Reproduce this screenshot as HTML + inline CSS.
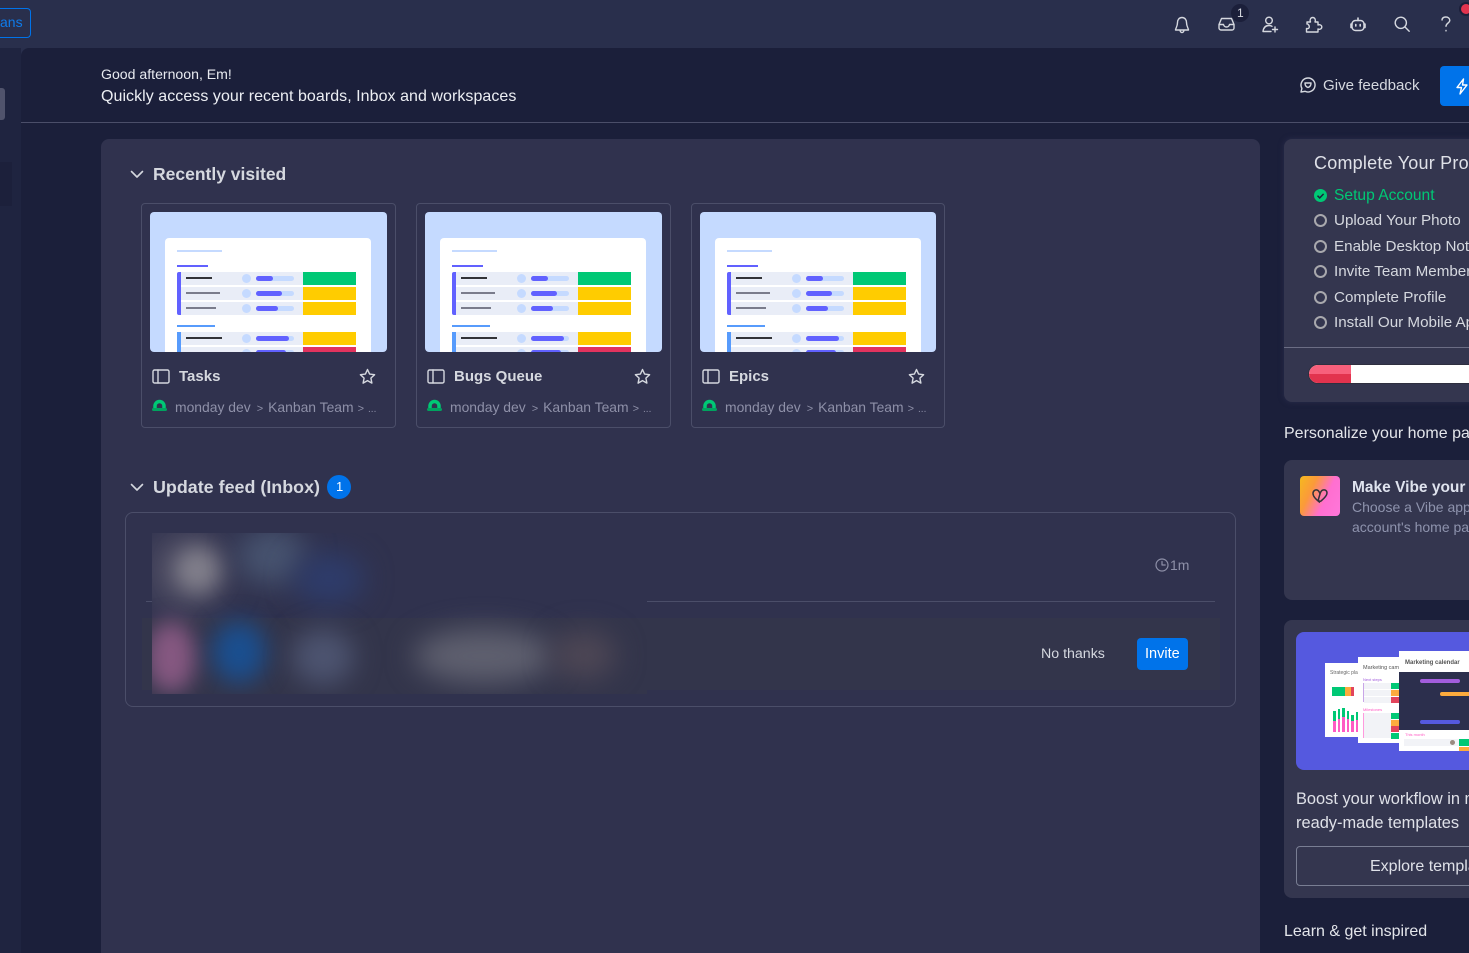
<!DOCTYPE html>
<html><head><meta charset="utf-8"><style>
html,body{margin:0;padding:0;width:1469px;height:953px;overflow:hidden;background:#292f4c}
body{font-family:"Liberation Sans",sans-serif;color:#d5d8df}
#root{position:absolute;left:0;top:0;width:1469px;height:953px;overflow:hidden}
.a{position:absolute}
.t{position:absolute;white-space:nowrap;line-height:20px}
svg{position:absolute;overflow:visible}
.card{position:absolute;top:203px;width:253px;height:223px;border:1px solid #4b4e69;border-radius:4px}
.thumb{position:absolute;left:8px;top:8px;width:237px;height:140px;background:#c5daff;border-radius:4px;overflow:hidden}
.thumb div{position:absolute}
.w{left:15px;top:26px;width:206px;height:130px;background:#fff;border-radius:4px}
.row{left:31px;width:122px;height:13px;background:#e9edf7}
.cell{left:153px;width:53px;height:13px}
.ln{left:36px;height:1.5px;background:#7a7c8c}
.dot{left:92px;width:9px;height:9px;border-radius:50%;background:#c5daff}
.tr{left:106px;width:38px;height:5px;border-radius:3px;background:#c5daff}
.fl{left:106px;height:5px;border-radius:3px;background:#6161ff}
.ctitle{font-size:15px;font-weight:700;left:37px;top:163px;color:#d5d8df}
.bread{font-size:13.9px;left:33px;top:193px;color:#8e90a8}
.bread i{font-style:normal;font-size:11px;margin:0 5px 0 6px}
.bread u{text-decoration:none;font-size:11px;margin:0 4px 0 4px}
.bread b{font-weight:400;font-size:10px}
.li{font-size:15.2px;left:1334px;color:#d5d8df}
.ring{position:absolute;left:1314px;width:9px;height:9px;border:2px solid #a8a8ad;border-radius:50%}
.ic{fill:none;stroke:#d5d8df;stroke-width:1.4;stroke-linecap:round;stroke-linejoin:round}
.blur{position:absolute;border-radius:50%}
</style></head><body><div id="root">

<div class="a" style="left:0;top:48px;width:21px;height:905px;background:#1f2440"></div>
<div class="a" style="left:0;top:88px;width:5px;height:32px;background:#50536c;border-radius:0 3px 3px 0"></div>
<div class="a" style="left:0;top:162px;width:12px;height:44px;background:#1c203b"></div>
<div class="a" style="left:21px;top:48px;width:1448px;height:905px;background:#1b1f3a;border-radius:8px 0 0 0"></div>

<div class="a" style="left:-20px;top:8px;width:49px;height:28px;border:1px solid #0073ea;border-radius:4px"></div>
<div class="t" style="left:0;top:12px;font-size:14px;color:#0f7bea">ans</div>

<svg class="ic" style="left:1174px;top:16px" width="16" height="18" viewBox="0 0 16 18"><path d="M8 1.500C5 1.500 3.500 4 3.500 6.500c0 4-1.800 5.500-2 7.500h13c-.2-2-2-3.500-2-7.500C12.500 4 11 1.500 8 1.500zM6 14.200c.2 1.500 1 2.300 2 2.300s1.800-.8 2-2.300"/></svg>
<svg class="ic" style="left:1218px;top:16px" width="17" height="16" viewBox="0 0 17 16"><path d="M3.500 2.500h10l2.500 6v3.500a2 2 0 0 1-2 2H3a2 2 0 0 1-2-2V8.500zM1 8.500h4.500c.5 2 1.500 2.500 3 2.500s2.500-.5 3-2.500H16"/></svg>
<div class="a" style="left:1231px;top:4px;width:18px;height:18px;border-radius:50%;background:#1b1f3a"></div>
<div class="t" style="left:1237px;top:3px;font-size:12px;color:#d5d8df">1</div>
<svg class="ic" style="left:1262px;top:16px" width="17" height="17" viewBox="0 0 17 17"><circle cx="7" cy="4.500" r="3.300"/><path d="M1 15.500c.5-4 2.500-6 6-6 1.200 0 2.200.3 3 .8M1 15.500h8M13 11v5M10.500 13.500h5"/></svg>
<svg class="ic" style="left:1305px;top:16px" width="18" height="17" viewBox="0 0 18 17"><path d="M2 6h3.500c-1-2 0-4.500 2.200-4.500S11 4 10 6h3v3c2-.8 3.800.3 3.800 2s-1.800 2.800-3.800 2v3H1.500v-3.500c1.800.5 2.800-.5 2.800-1.800S3 7.700 2 8z"/></svg>
<svg class="ic" style="left:1350px;top:17px" width="16" height="15" viewBox="0 0 16 15"><rect x="2" y="3.500" width="12" height="10" rx="3.500"/><path d="M8 3.500V1M2 7H1v3.500h1M14 7h1v3.500h-1M5.800 7.500v1.500M10.200 7.500v1.500" stroke-width="1.600"/></svg>
<svg class="ic" style="left:1394px;top:16px" width="16" height="16" viewBox="0 0 16 16"><circle cx="6.800" cy="6.800" r="5.600"/><path d="M11 11l4.200 4.200"/></svg>
<svg class="ic" style="left:1441px;top:16px" width="10" height="16" viewBox="0 0 10 16"><path d="M1 4c.2-2 1.800-3 3.800-3C7 1 8.800 2.300 8.800 4.300c0 2.700-3.800 2.900-3.800 6M5 14.500v.4"/></svg>
<div class="a" style="left:1461px;top:4px;width:10px;height:10px;border-radius:50%;background:#e2334e;box-shadow:0 0 0 2px #1b1f3a"></div>

<div class="t" style="left:101px;top:64px;font-size:14.1px;color:#e8eaf0">Good afternoon, Em!</div>
<div class="t" style="left:101px;top:87px;font-size:16px;letter-spacing:.05px;color:#eceef3">Quickly access your recent boards, Inbox and workspaces</div>
<svg class="ic" style="left:1300px;top:77px" width="16" height="16" viewBox="0 0 16 16"><path d="M8 1a7 7 0 1 1-3 13.300L1 15l.9-3.600A7 7 0 0 1 8 1z"/><path d="M5 6h6c0 2.500-1.500 4-3 4.500C6.500 10 5 8.500 5 6z"/></svg>
<div class="t" style="left:1323px;top:76px;font-size:15.1px;color:#d5d8df">Give feedback</div>
<div class="a" style="left:1440px;top:66px;width:40px;height:40px;background:#0073ea;border-radius:4px"></div>
<svg class="ic" style="left:1456px;top:78px;stroke:#fff" width="12" height="17" viewBox="0 0 12 17"><path d="M7.500 1L1 9.500h4.500L4 16l7-9H6.500z"/></svg>
<div class="a" style="left:21px;top:122px;width:1448px;height:1px;background:#4b4e69"></div>

<div class="a" style="left:101px;top:139px;width:1159px;height:830px;background:#30324e;border-radius:8px"></div>

<svg class="ic" style="left:130px;top:170px;stroke-width:1.600" width="14" height="9" viewBox="0 0 14 9"><path d="M1.500 1.500L7 7l5.500-5.500"/></svg>
<div class="t" style="left:153px;top:164px;font-size:17.5px;font-weight:700;color:#d5d8df">Recently visited</div>

<!-- Card 1 -->
<div class="card" style="left:141px">
 <div class="thumb"><div class="w"></div>
  <div style="left:27px;top:38px;width:45px;height:2px;background:#c5daff"></div>
  <div style="left:27px;top:53px;width:31px;height:2px;background:#6161ff"></div>
  <div style="left:27px;top:60px;width:4px;height:43px;background:#6161ff;border-radius:2px 0 0 2px"></div>
  <div class="row" style="top:60px"></div><div class="row" style="top:75px"></div><div class="row" style="top:90px"></div>
  <div class="cell" style="top:60px;background:#00c875"></div><div class="cell" style="top:75px;background:#fc0"></div><div class="cell" style="top:90px;background:#fc0"></div>
  <div class="ln" style="top:65px;width:26px;background:#323338"></div><div class="ln" style="top:80px;width:34px"></div><div class="ln" style="top:95px;width:30px"></div>
  <div class="dot" style="top:62px"></div><div class="dot" style="top:77px"></div><div class="dot" style="top:92px"></div>
  <div class="tr" style="top:64px"></div><div class="tr" style="top:79px"></div><div class="tr" style="top:94px"></div>
  <div class="fl" style="top:64px;width:17px"></div><div class="fl" style="top:79px;width:26px"></div><div class="fl" style="top:94px;width:22px"></div>
  <div style="left:27px;top:113px;width:38px;height:2px;background:#579bfc"></div>
  <div style="left:27px;top:120px;width:4px;height:20px;background:#579bfc"></div>
  <div class="row" style="top:120px"></div><div class="row" style="top:135px"></div>
  <div class="cell" style="top:120px;background:#fc0"></div><div class="cell" style="top:135px;background:#e2335e"></div>
  <div class="ln" style="top:125px;width:36px;background:#323338"></div>
  <div class="dot" style="top:122px"></div><div class="dot" style="top:137px"></div>
  <div class="tr" style="top:124px"></div><div class="tr" style="top:138px"></div>
  <div class="fl" style="top:124px;width:33px"></div><div class="fl" style="top:138px;width:30px"></div>
 </div>
 <svg class="ic" style="left:10px;top:165px" width="18" height="15" viewBox="0 0 18 15"><rect x="1" y="1" width="16" height="13" rx="1.500"/><path d="M6 1v13"/></svg>
 <div class="t ctitle">Tasks</div>
 <svg class="ic" style="left:217px;top:164px" width="17" height="17" viewBox="0 0 17 17"><path d="M8.500 1.500l2.100 4.600 5 .6-3.700 3.400 1 5-4.400-2.500-4.400 2.500 1-5L1.400 6.700l5-.6z"/></svg>
 <svg style="left:9px;top:195px" width="17" height="13" viewBox="0 0 17 13"><path d="M4 9V7a4.500 4.500 0 0 1 9 0v2" fill="none" stroke="#00c875" stroke-width="3.500"/><rect x="1" y="9" width="15" height="3" rx="1.500" fill="#00a35f"/></svg>
 <div class="t bread">monday dev<i>&gt;</i>Kanban Team<u>&gt;</u><b>...</b></div>
</div>

<!-- Card 2 -->
<div class="card" style="left:416px;width:253px">
 <div class="thumb"><div class="w"></div>
  <div style="left:27px;top:38px;width:45px;height:2px;background:#c5daff"></div>
  <div style="left:27px;top:53px;width:31px;height:2px;background:#6161ff"></div>
  <div style="left:27px;top:60px;width:4px;height:43px;background:#6161ff;border-radius:2px 0 0 2px"></div>
  <div class="row" style="top:60px"></div><div class="row" style="top:75px"></div><div class="row" style="top:90px"></div>
  <div class="cell" style="top:60px;background:#00c875"></div><div class="cell" style="top:75px;background:#fc0"></div><div class="cell" style="top:90px;background:#fc0"></div>
  <div class="ln" style="top:65px;width:26px;background:#323338"></div><div class="ln" style="top:80px;width:34px"></div><div class="ln" style="top:95px;width:30px"></div>
  <div class="dot" style="top:62px"></div><div class="dot" style="top:77px"></div><div class="dot" style="top:92px"></div>
  <div class="tr" style="top:64px"></div><div class="tr" style="top:79px"></div><div class="tr" style="top:94px"></div>
  <div class="fl" style="top:64px;width:17px"></div><div class="fl" style="top:79px;width:26px"></div><div class="fl" style="top:94px;width:22px"></div>
  <div style="left:27px;top:113px;width:38px;height:2px;background:#579bfc"></div>
  <div style="left:27px;top:120px;width:4px;height:20px;background:#579bfc"></div>
  <div class="row" style="top:120px"></div><div class="row" style="top:135px"></div>
  <div class="cell" style="top:120px;background:#fc0"></div><div class="cell" style="top:135px;background:#e2335e"></div>
  <div class="ln" style="top:125px;width:36px;background:#323338"></div>
  <div class="dot" style="top:122px"></div><div class="dot" style="top:137px"></div>
  <div class="tr" style="top:124px"></div><div class="tr" style="top:138px"></div>
  <div class="fl" style="top:124px;width:33px"></div><div class="fl" style="top:138px;width:30px"></div>
 </div>
 <svg class="ic" style="left:10px;top:165px" width="18" height="15" viewBox="0 0 18 15"><rect x="1" y="1" width="16" height="13" rx="1.500"/><path d="M6 1v13"/></svg>
 <div class="t ctitle">Bugs Queue</div>
 <svg class="ic" style="left:217px;top:164px" width="17" height="17" viewBox="0 0 17 17"><path d="M8.500 1.500l2.100 4.600 5 .6-3.700 3.400 1 5-4.400-2.500-4.400 2.500 1-5L1.400 6.700l5-.6z"/></svg>
 <svg style="left:9px;top:195px" width="17" height="13" viewBox="0 0 17 13"><path d="M4 9V7a4.500 4.500 0 0 1 9 0v2" fill="none" stroke="#00c875" stroke-width="3.500"/><rect x="1" y="9" width="15" height="3" rx="1.500" fill="#00a35f"/></svg>
 <div class="t bread">monday dev<i>&gt;</i>Kanban Team<u>&gt;</u><b>...</b></div>
</div>

<!-- Card 3 -->
<div class="card" style="left:691px;width:252px">
 <div class="thumb" style="width:236px"><div class="w"></div>
  <div style="left:27px;top:38px;width:45px;height:2px;background:#c5daff"></div>
  <div style="left:27px;top:53px;width:31px;height:2px;background:#6161ff"></div>
  <div style="left:27px;top:60px;width:4px;height:43px;background:#6161ff;border-radius:2px 0 0 2px"></div>
  <div class="row" style="top:60px"></div><div class="row" style="top:75px"></div><div class="row" style="top:90px"></div>
  <div class="cell" style="top:60px;background:#00c875"></div><div class="cell" style="top:75px;background:#fc0"></div><div class="cell" style="top:90px;background:#fc0"></div>
  <div class="ln" style="top:65px;width:26px;background:#323338"></div><div class="ln" style="top:80px;width:34px"></div><div class="ln" style="top:95px;width:30px"></div>
  <div class="dot" style="top:62px"></div><div class="dot" style="top:77px"></div><div class="dot" style="top:92px"></div>
  <div class="tr" style="top:64px"></div><div class="tr" style="top:79px"></div><div class="tr" style="top:94px"></div>
  <div class="fl" style="top:64px;width:17px"></div><div class="fl" style="top:79px;width:26px"></div><div class="fl" style="top:94px;width:22px"></div>
  <div style="left:27px;top:113px;width:38px;height:2px;background:#579bfc"></div>
  <div style="left:27px;top:120px;width:4px;height:20px;background:#579bfc"></div>
  <div class="row" style="top:120px"></div><div class="row" style="top:135px"></div>
  <div class="cell" style="top:120px;background:#fc0"></div><div class="cell" style="top:135px;background:#e2335e"></div>
  <div class="ln" style="top:125px;width:36px;background:#323338"></div>
  <div class="dot" style="top:122px"></div><div class="dot" style="top:137px"></div>
  <div class="tr" style="top:124px"></div><div class="tr" style="top:138px"></div>
  <div class="fl" style="top:124px;width:33px"></div><div class="fl" style="top:138px;width:30px"></div>
 </div>
 <svg class="ic" style="left:10px;top:165px" width="18" height="15" viewBox="0 0 18 15"><rect x="1" y="1" width="16" height="13" rx="1.500"/><path d="M6 1v13"/></svg>
 <div class="t ctitle">Epics</div>
 <svg class="ic" style="left:216px;top:164px" width="17" height="17" viewBox="0 0 17 17"><path d="M8.500 1.500l2.100 4.600 5 .6-3.700 3.400 1 5-4.400-2.500-4.400 2.500 1-5L1.400 6.700l5-.6z"/></svg>
 <svg style="left:9px;top:195px" width="17" height="13" viewBox="0 0 17 13"><path d="M4 9V7a4.500 4.500 0 0 1 9 0v2" fill="none" stroke="#00c875" stroke-width="3.500"/><rect x="1" y="9" width="15" height="3" rx="1.500" fill="#00a35f"/></svg>
 <div class="t bread">monday dev<i>&gt;</i>Kanban Team<u>&gt;</u><b>...</b></div>
</div>

<!-- Update feed -->
<svg class="ic" style="left:130px;top:483px;stroke-width:1.600" width="14" height="9" viewBox="0 0 14 9"><path d="M1.500 1.500L7 7l5.500-5.500"/></svg>
<div class="t" style="left:153px;top:477px;font-size:17.9px;font-weight:700;color:#d5d8df">Update feed (Inbox)</div>
<div class="a" style="left:327px;top:475px;width:24px;height:24px;border-radius:50%;background:#0073ea"></div>
<div class="t" style="left:336px;top:477px;font-size:13px;color:#fff">1</div>

<div class="a" style="left:125px;top:512px;width:1109px;height:193px;border:1px solid #4b4e69;border-radius:8px"></div>
<div class="a" style="left:146px;top:601px;width:1069px;height:1px;background:#4b4e69"></div>
<div class="a" style="left:142px;top:618px;width:1078px;height:72px;background:#33354b"></div>
<div class="a" style="left:152px;top:533px;width:495px;height:161px;background:#30324e;overflow:hidden">
 <div class="a" style="left:0;top:85px;width:495px;height:76px;background:#33354b"></div>
 <div class="blur" style="left:-10px;top:-5px;width:90px;height:85px;background:#4a4960;filter:blur(14px)"></div>
 <div class="blur" style="left:22px;top:14px;width:46px;height:46px;background:#807e8a;filter:blur(10px)"></div>
 <div class="blur" style="left:85px;top:-6px;width:70px;height:58px;background:#47536f;filter:blur(14px)"></div>
 <div class="blur" style="left:142px;top:20px;width:70px;height:52px;background:#2e3c6b;filter:blur(14px)"></div>
 <div class="blur" style="left:-6px;top:88px;width:50px;height:72px;background:#865881;filter:blur(11px)"></div>
 <div class="blur" style="left:60px;top:88px;width:54px;height:62px;background:#1a4f90;filter:blur(12px)"></div>
 <div class="blur" style="left:140px;top:96px;width:62px;height:56px;background:#4d5470;filter:blur(13px)"></div>
 <div class="blur" style="left:262px;top:96px;width:140px;height:54px;background:#5f606f;filter:blur(14px)"></div>
 <div class="blur" style="left:400px;top:98px;width:64px;height:48px;background:#4e4755;filter:blur(14px)"></div>
</div>
<svg class="ic" style="left:1155px;top:558px;stroke:#8e90a8;stroke-width:1.200" width="14" height="14" viewBox="0 0 14 14"><circle cx="7" cy="7" r="6"/><path d="M7 3.500V7h3.200"/></svg>
<div class="t" style="left:1170px;top:555px;font-size:14px;color:#8e90a8">1m</div>
<div class="t" style="left:1041px;top:644px;font-size:14.2px;color:#d5d8df">No thanks</div>
<div class="a" style="left:1137px;top:638px;width:51px;height:32px;background:#0073ea;border-radius:4px"></div>
<div class="t" style="left:1145px;top:644px;font-size:14.5px;color:#fff">Invite</div>

<!-- Right column -->
<div class="a" style="left:1284px;top:139px;width:200px;height:263px;background:#34364f;border-radius:8px;box-shadow:0 0 6px #2a2d4c"></div>
<div class="t" style="left:1314px;top:153px;font-size:18px;letter-spacing:.22px;color:#dfe1e8">Complete Your Profile</div>
<svg style="left:1314px;top:189px" width="13" height="13" viewBox="0 0 13 13"><circle cx="6.500" cy="6.500" r="6.500" fill="#00c875"/><path d="M3.500 6.700l2.200 2.200 3.900-4" fill="none" stroke="#1b1f3a" stroke-width="1.500"/></svg>
<div class="t li" style="top:186px;font-size:15.6px;color:#00c875">Setup Account</div>
<div class="ring" style="top:214px"></div><div class="t li" style="top:211px">Upload Your Photo</div>
<div class="ring" style="top:240px"></div><div class="t li" style="top:237px">Enable Desktop Notifications</div>
<div class="ring" style="top:265px"></div><div class="t li" style="top:262px">Invite Team Members</div>
<div class="ring" style="top:291px"></div><div class="t li" style="top:288px">Complete Profile</div>
<div class="ring" style="top:316px"></div><div class="t li" style="top:313px">Install Our Mobile App</div>
<div class="a" style="left:1284px;top:347px;width:185px;height:1px;background:#6b6d84"></div>
<div class="a" style="left:1309px;top:365px;width:180px;height:18px;background:#fff;border-radius:9px;overflow:hidden;box-shadow:0 0 0 1px #2e2f3f">
 <div class="a" style="left:0;top:0;width:42px;height:9px;background:#f7607c"></div>
 <div class="a" style="left:0;top:9px;width:42px;height:9px;background:#e2334e"></div>
</div>

<div class="t" style="left:1284px;top:424px;font-size:16px;color:#e3e5ea">Personalize your home page</div>
<div class="a" style="left:1284px;top:460px;width:200px;height:140px;background:#34364f;border-radius:8px"></div>
<div class="a" style="left:1300px;top:476px;width:40px;height:40px;border-radius:4px;background:linear-gradient(115deg,#f5b91e 0%,#fb9a3a 30%,#ff6fd0 62%,#ff77da 100%)"></div>
<svg style="left:1312px;top:488px;fill:none;stroke:#323338;stroke-width:1.500;stroke-linejoin:round" width="16" height="16" viewBox="0 0 16 16"><path d="M8 14.500C4 11.500 1 8.500 1 5.500 1 3 3 1.500 5 2c1.500.4 2.500 2 3 4l-1.500 5c-.5 1.500 1 3 2.500 2 3-2.500 6-5.500 6-8S13 1.500 11 2C9.500 2.400 8.500 4 8 6"/></svg>
<div class="t" style="left:1352px;top:478px;font-size:15.5px;font-weight:700;color:#dfe3ee">Make Vibe your home page</div>
<div class="t" style="left:1352px;top:497px;font-size:14px;color:#8e93ad">Choose a Vibe app as your</div>
<div class="t" style="left:1352px;top:517px;font-size:14px;color:#8e93ad">account's home page</div>

<div class="a" style="left:1284px;top:620px;width:200px;height:278px;background:#34364f;border-radius:8px"></div>
<div class="a" style="left:1296px;top:632px;width:190px;height:138px;background:#5559df;border-radius:8px"></div>

<!-- Strategic plan -->
<div class="a" style="left:1325px;top:663px;width:36px;height:74px;background:#fff">
 <div class="t" style="left:5px;top:0;font-size:5px;color:#666">Strategic plan</div>
 <div class="a" style="left:7px;top:24px;width:22px;height:9px;background:linear-gradient(90deg,#00c875 59%,#fdab3d 59%,#fdab3d 86%,#e2445c 86%)"></div>
 <div class="a" style="left:8px;top:48px;width:2.500px;height:10px;background:#00c875"></div><div class="a" style="left:8px;top:58px;width:2.500px;height:11px;background:#ff5ac4"></div>
 <div class="a" style="left:12.500px;top:46px;width:2.500px;height:10px;background:#00c875"></div><div class="a" style="left:12.500px;top:56px;width:2.500px;height:13px;background:#ff5ac4"></div>
 <div class="a" style="left:17px;top:45px;width:2.500px;height:9px;background:#00c875"></div><div class="a" style="left:17px;top:54px;width:2.500px;height:15px;background:#ff5ac4"></div>
 <div class="a" style="left:21.500px;top:48px;width:2.500px;height:8px;background:#00c875"></div><div class="a" style="left:21.500px;top:56px;width:2.500px;height:13px;background:#ff5ac4"></div>
 <div class="a" style="left:26px;top:52px;width:2.500px;height:6px;background:#00c875"></div><div class="a" style="left:26px;top:58px;width:2.500px;height:11px;background:#ff5ac4"></div>
 <div class="a" style="left:30.500px;top:49px;width:2.500px;height:8px;background:#00c875"></div><div class="a" style="left:30.500px;top:57px;width:2.500px;height:12px;background:#ff5ac4"></div>
</div>

<!-- Marketing campaign -->
<div class="a" style="left:1358px;top:657px;width:42px;height:86px;background:#fff">
 <div class="t" style="left:5px;top:1px;font-size:5.500px;color:#555">Marketing campaign</div>
 <div class="t" style="left:5px;top:13px;font-size:4px;color:#a25ddc">Next steps</div>
 <div class="a" style="left:5px;top:26px;width:1px;height:19px;background:#c9a6e8"></div>
 <div class="a" style="left:6px;top:26px;width:27px;height:5.500px;background:#f2f3f7"></div>
 <div class="a" style="left:6px;top:33px;width:27px;height:5.500px;background:#f2f3f7"></div>
 <div class="a" style="left:6px;top:40px;width:27px;height:5.500px;background:#f2f3f7"></div>
 <div class="a" style="left:33px;top:26px;width:9px;height:6px;background:#00c875"></div>
 <div class="a" style="left:33px;top:33px;width:9px;height:6px;background:#fdab3d"></div>
 <div class="a" style="left:33px;top:40px;width:9px;height:6px;background:#e2445c"></div>
 <div class="t" style="left:5px;top:43px;font-size:4px;color:#ff5ac4">Milestones</div>
 <div class="a" style="left:5px;top:56px;width:1px;height:25px;background:#ff9ade"></div>
 <div class="a" style="left:6px;top:56px;width:27px;height:25px;background:#f2f3f7"></div>
 <div class="a" style="left:33px;top:56px;width:9px;height:6px;background:#00c875"></div>
 <div class="a" style="left:33px;top:62.500px;width:9px;height:6px;background:#fdab3d"></div>
 <div class="a" style="left:33px;top:69px;width:9px;height:6px;background:#e2445c"></div>
 <div class="a" style="left:33px;top:75.500px;width:9px;height:6px;background:#00c875"></div>
</div>

<!-- Marketing calendar -->
<div class="a" style="left:1399px;top:651px;width:80px;height:100px;background:#fff">
 <div class="t" style="left:6px;top:2px;font-size:6px;font-weight:700;color:#555">Marketing calendar</div>
 <div class="a" style="left:0;top:21px;width:80px;height:58px;background:#2c2f4d"></div>
 <div class="a" style="left:21px;top:28px;width:40px;height:4px;border-radius:2px;background:#a25ddc"></div>
 <div class="a" style="left:41px;top:41px;width:40px;height:4px;border-radius:2px;background:#fdab3d"></div>
 <div class="a" style="left:21px;top:69px;width:40px;height:4px;border-radius:2px;background:#5559df"></div>
 <div class="t" style="left:6px;top:74px;font-size:4px;color:#ff5ac4">This month</div>
 <div class="a" style="left:5px;top:88px;width:55px;height:7px;background:#f2f3f7"></div>
 <div class="a" style="left:51px;top:89px;width:5px;height:5px;border-radius:50%;background:#9a8a80"></div>
 <div class="a" style="left:60px;top:88px;width:20px;height:7px;background:#00c875"></div>
 <div class="a" style="left:60px;top:96px;width:20px;height:4px;background:#fdab3d"></div>
</div>

<div class="t" style="left:1296px;top:789px;font-size:16.4px;color:#dfe1e8">Boost your workflow in minutes with</div>
<div class="t" style="left:1296px;top:813px;font-size:16.4px;color:#dfe1e8">ready-made templates</div>
<div class="a" style="left:1296px;top:846px;width:190px;height:38px;border:1px solid #797e93;border-radius:4px"></div>
<div class="t" style="left:1370px;top:857px;font-size:16px;color:#dfe1e8">Explore templates</div>
<div class="t" style="left:1284px;top:922px;font-size:16px;color:#e3e5ea">Learn &amp; get inspired</div>
</div></body></html>
